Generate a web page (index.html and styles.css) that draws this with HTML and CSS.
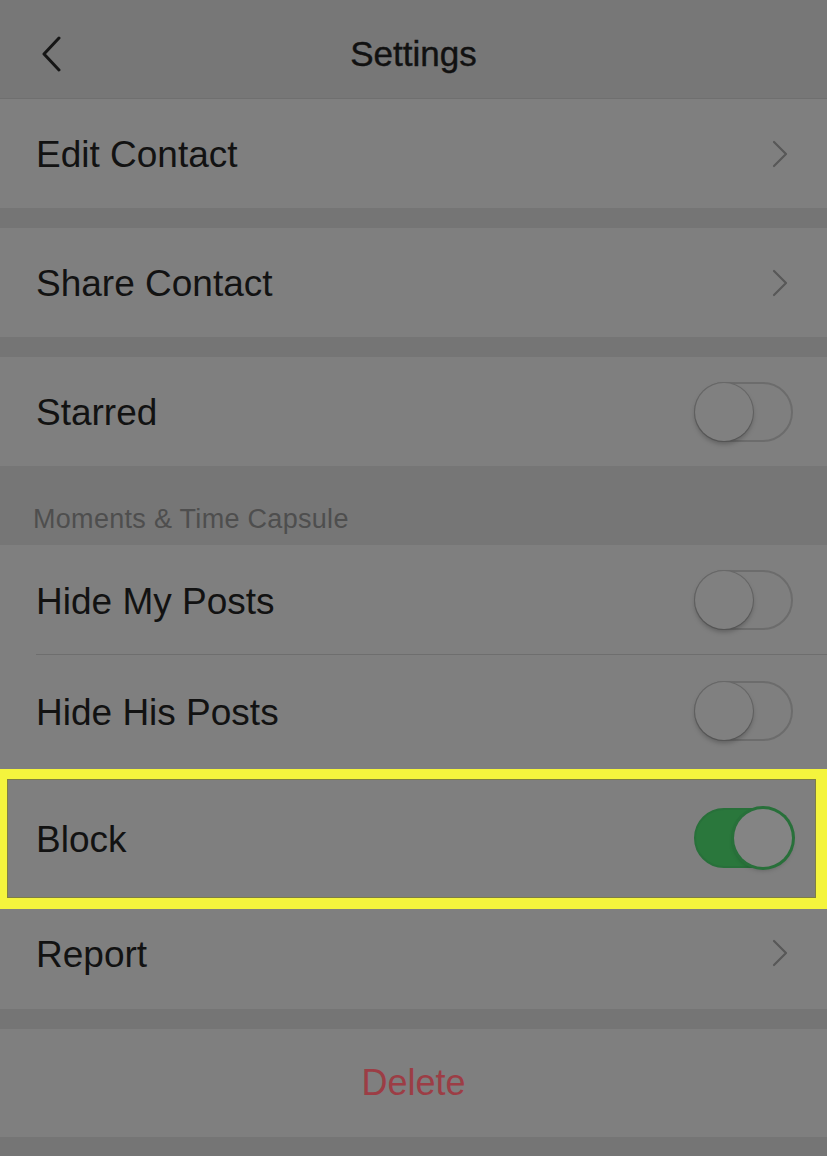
FILE: index.html
```html
<!DOCTYPE html>
<html lang="en">
<head>
    <meta charset="UTF-8">
    <meta name="viewport" content="width=device-width, initial-scale=1.0">
    <title>Settings</title>
    <link rel="stylesheet" href="styles.css">
</head>
<body>
    <div class="screen">
        <div class="navbar">
            <span class="back">
                <svg width="20" height="36" viewBox="0 0 20 36"><path d="M18 2 L3 18 L18 34" fill="none" stroke="#161616" stroke-width="3" stroke-linecap="round" stroke-linejoin="round"/></svg>
            </span>
            <h1>Settings</h1>
        </div>

        <div class="group">
            <div class="row">
                <span class="label">Edit Contact</span>
                <svg class="chevron" width="16" height="28" viewBox="0 0 16 28"><path d="M2 2 L14 14 L2 26" fill="none" stroke="#585858" stroke-width="2.2" stroke-linecap="round" stroke-linejoin="round"/></svg>
            </div>
        </div>

        <div class="group">
            <div class="row">
                <span class="label">Share Contact</span>
                <svg class="chevron" width="16" height="28" viewBox="0 0 16 28"><path d="M2 2 L14 14 L2 26" fill="none" stroke="#585858" stroke-width="2.2" stroke-linecap="round" stroke-linejoin="round"/></svg>
            </div>
        </div>

        <div class="group last">
            <div class="row">
                <span class="label">Starred</span>
                <span class="toggle"><span class="knob"></span></span>
            </div>
        </div>

        <div class="section-title">Moments &amp; Time Capsule</div>

        <div class="group">
            <div class="row divided">
                <span class="label">Hide My Posts</span>
                <span class="toggle"><span class="knob"></span></span>
            </div>
            <div class="row tall">
                <span class="label">Hide His Posts</span>
                <span class="toggle"><span class="knob"></span></span>
            </div>
            <div class="row block-row">
                <span class="label">Block</span>
                <span class="toggle on"><span class="knob"></span></span>
                <div class="highlight"></div>
            </div>
            <div class="row report-row">
                <span class="label">Report</span>
                <svg class="chevron" width="16" height="28" viewBox="0 0 16 28"><path d="M2 2 L14 14 L2 26" fill="none" stroke="#585858" stroke-width="2.2" stroke-linecap="round" stroke-linejoin="round"/></svg>
            </div>
        </div>

        <div class="group">
            <div class="row delete-row">
                <span class="delete">Delete</span>
            </div>
        </div>
    </div>
</body>
</html>
```

FILE: styles.css
```css
body {
    margin: 0;
    background-color: #757575;
    font-family: "Liberation Sans", Arial, sans-serif;
    color: #121212;
}
.screen {
    width: 827px;
    height: 1156px;
    overflow: hidden;
    background-color: #757575;
}
.navbar {
    height: 98px;
    display: flex;
    align-items: center;
    justify-content: center;
    position: relative;
    background-color: #777777;
    border-bottom: 1px solid #6f6f6f;
}
.navbar h1 {
    margin: 0;
    font-weight: normal;
    font-size: 35px;
    color: #111;
    padding-top: 10px;
    -webkit-text-stroke: 0.4px #111;
}
.back {
    position: absolute;
    left: 41px;
    top: 36px;
    display: flex;
}
.group {
    background-color: #7f7f7f;
    margin-bottom: 20px;
}
.group.last {
    margin-bottom: 0;
}
.row {
    height: 109px;
    display: flex;
    align-items: center;
    justify-content: space-between;
    padding: 0 36px;
    position: relative;
}
.label {
    font-size: 37px;
    color: #121212;
    padding-top: 3px;
}
.chevron {
    margin-right: 3px;
}
.row.divided {
    height: 110px;
}
.row.divided::after {
    content: "";
    position: absolute;
    left: 36px;
    right: 0;
    bottom: 0;
    height: 1px;
    background-color: #6e6e6e;
}
.row.tall {
    height: 112px;
}
.row.block-row {
    height: 142px;
}
.row.report-row {
    height: 100px;
    padding-bottom: 12px;
    box-sizing: border-box;
}
.section-title {
    height: 79px;
    box-sizing: border-box;
    padding: 38px 0 0 33px;
    font-size: 27px;
    letter-spacing: 0.3px;
    color: #4e4e4e;
    background-color: #767676;
}
.toggle {
    width: 99px;
    height: 60px;
    border-radius: 30px;
    border: 2px solid #6c6c6c;
    box-sizing: border-box;
    position: relative;
    margin-right: -2px;
}
.toggle .knob {
    position: absolute;
    left: -1px;
    top: -1px;
    width: 58px;
    height: 58px;
    border-radius: 50%;
    background-color: #808080;
    box-shadow: 0 3px 5px rgba(0, 0, 0, 0.25), 0 0 0 1px #6a6a6a;
}
.toggle.on {
    background-color: #2a773c;
    border-color: #28703a;
}
.toggle.on .knob {
    left: auto;
    right: -1px;
    background-color: #848484;
    box-shadow: 0 0 0 3px #28703a, 0 3px 5px rgba(0, 0, 0, 0.25);
}
.highlight {
    position: absolute;
    top: 2px;
    left: 0;
    right: 0;
    bottom: 0;
    border-style: solid;
    border-color: #f4f43d;
    border-width: 10px 11px 11px 7px;
    box-shadow: inset 0 0 0 1px #7d7d44;
    pointer-events: none;
}
.delete-row {
    height: 108px;
    justify-content: center;
}
.delete {
    font-size: 36px;
    color: #9c3d45;
}
```
